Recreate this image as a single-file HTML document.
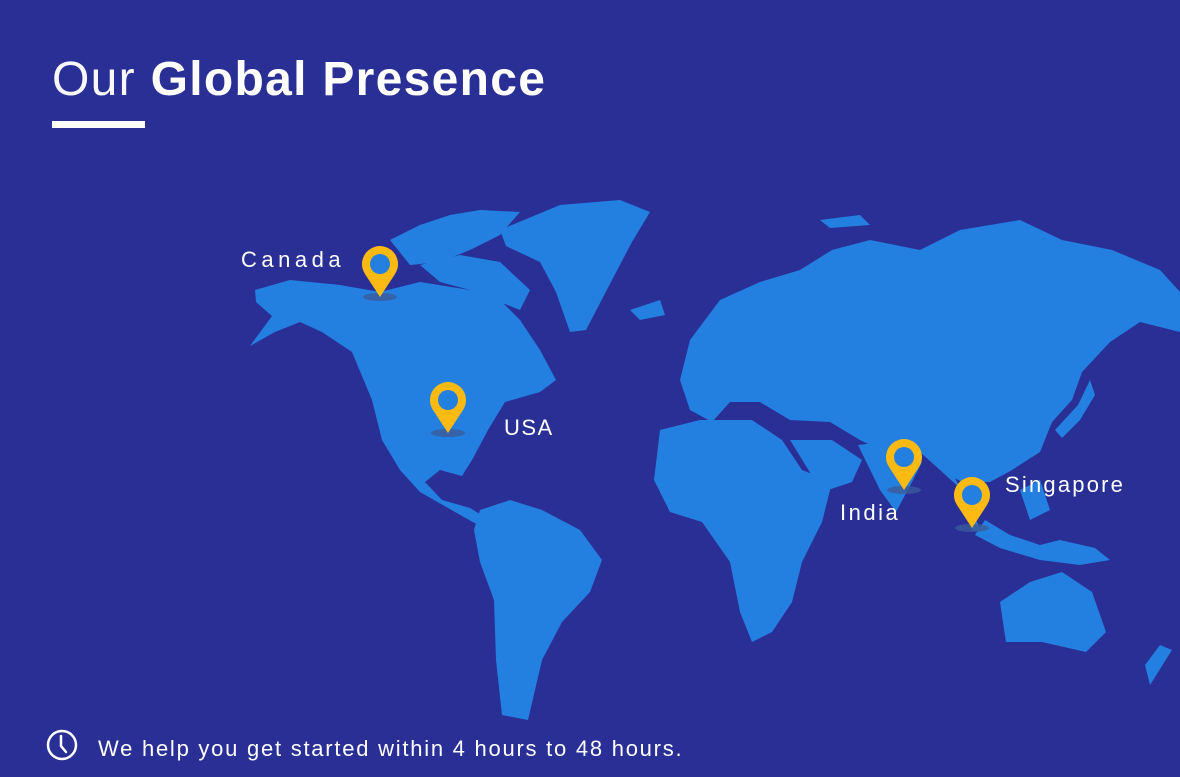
<!DOCTYPE html>
<html><head><meta charset="utf-8"><style>
html,body{margin:0;padding:0;}
body{width:1180px;height:777px;background:#2a2f96;position:relative;overflow:hidden;font-family:"Liberation Sans",sans-serif;color:#fff;}
.t{position:absolute;left:52px;top:52px;font-size:48px;white-space:nowrap;letter-spacing:1.3px}
.t .l{font-weight:300;opacity:.97}
.bar{position:absolute;left:52px;top:121px;width:93px;height:7px;background:#fff}
.lb{position:absolute;font-size:22px;letter-spacing:1.5px}
.ft{position:absolute;left:98px;top:736px;font-size:22px;letter-spacing:1.75px;white-space:nowrap}
svg{position:absolute;left:0;top:0}
</style></head><body>
<div class="t"><span class="l">Our</span> <b>Global Presence</b></div>
<div class="bar"></div>
<svg width="1180" height="777" viewBox="0 0 1180 777">
<g fill="#2380e0">
<path d="M255,290 L290,280 L340,285 L380,292 L420,282 L470,290 L500,300 L520,320 L540,350 L556,380 L540,392 L505,402 L488,430 L472,460 L462,476 L440,470 L425,482 L442,500 L470,508 L490,520 L480,526 L455,512 L420,492 L400,470 L382,440 L372,400 L352,352 L322,332 L300,322 L275,332 L250,346 L272,316 L256,302Z"/>
<path d="M390,240 L420,225 L450,215 L480,210 L520,212 L500,235 L470,250 L440,262 L410,265Z"/>
<path d="M420,265 L460,255 L500,262 L530,290 L520,310 L495,300 L470,290 L440,282Z"/>
<path d="M500,230 L560,205 L620,200 L650,212 L632,242 L612,280 L586,330 L570,332 L556,292 L540,262 L506,246Z"/>
<path d="M480,510 L510,500 L542,510 L580,530 L602,560 L590,592 L562,622 L542,660 L528,720 L502,715 L496,660 L494,600 L480,562 L474,530Z"/>
<path d="M690,340 L720,300 L760,282 L800,270 L832,250 L870,240 L920,250 L960,230 L1020,220 L1062,240 L1112,250 L1160,270 L1180,292 L1180,332 L1140,322 L1110,342 L1082,372 L1072,400 L1052,422 L1040,452 L1012,470 L990,482 L962,482 L940,470 L920,452 L900,440 L880,450 L860,440 L830,422 L790,420 L760,402 L730,402 L712,422 L690,410 L680,380Z"/>
<path d="M660,430 L700,420 L752,420 L782,440 L802,470 L832,482 L822,522 L802,562 L792,602 L772,632 L752,642 L740,612 L730,562 L702,522 L670,512 L654,480Z"/>
<path d="M790,440 L832,440 L862,460 L852,482 L822,492Z"/>
<path d="M858,445 L900,440 L922,462 L912,482 L896,512 L880,490Z"/>
<path d="M940,470 L962,490 L972,530 L982,532 L966,500 L955,478Z"/>
<path d="M985,520 L1010,535 L1040,545 L1060,540 L1095,548 L1110,560 L1080,565 L1040,560 L1000,548 L975,535Z"/>
<path d="M1020,490 L1040,480 L1050,510 L1030,520Z"/>
<path d="M1000,602 L1030,582 L1062,572 L1092,592 L1106,632 L1086,652 L1042,642 L1006,642Z"/>
<path d="M1055,430 L1078,405 L1090,380 L1095,395 L1080,420 L1062,438Z"/>
<path d="M1145,665 L1160,645 L1172,650 L1150,685Z"/>
<path d="M630,310 L660,300 L665,315 L640,320Z"/>
<path d="M820,220 L860,215 L870,225 L830,228Z"/>
</g>
<g>
<ellipse cx="380" cy="297" rx="17" ry="4" fill="#3a5a9a" opacity=".8"/>
<path d="M380,297 L365,274 A18,18 0 1 1 395,274 Z" fill="#fdba12"/><circle cx="380" cy="264" r="10" fill="#2380e0"/>
<ellipse cx="448" cy="433" rx="17" ry="4" fill="#3a5a9a" opacity=".8"/>
<path d="M448,433 L433,410 A18,18 0 1 1 463,410 Z" fill="#fdba12"/><circle cx="448" cy="400" r="10" fill="#2380e0"/>
<ellipse cx="904" cy="490" rx="17" ry="4" fill="#3a5a9a" opacity=".8"/>
<path d="M904,490 L889,467 A18,18 0 1 1 919,467 Z" fill="#fdba12"/><circle cx="904" cy="457" r="10" fill="#2380e0"/>
<ellipse cx="972" cy="528" rx="17" ry="4" fill="#3a5a9a" opacity=".8"/>
<path d="M972,528 L957,505 A18,18 0 1 1 987,505 Z" fill="#fdba12"/><circle cx="972" cy="495" r="10" fill="#2380e0"/>
</g>
<g fill="none" stroke="#fff" stroke-width="2.5" stroke-linecap="round">
<circle cx="62" cy="745" r="14"/><path d="M61,736 L61,746 L66,752"/>
</g>
</svg>
<div class="lb" style="left:241px;top:247px;letter-spacing:4.5px">Canada</div>
<div class="lb" style="left:504px;top:415px">USA</div>
<div class="lb" style="left:840px;top:500px;letter-spacing:2.5px">India</div>
<div class="lb" style="left:1005px;top:472px;letter-spacing:2.2px">Singapore</div>
<div class="ft">We help you get started within 4 hours to 48 hours.</div>
</body></html>
